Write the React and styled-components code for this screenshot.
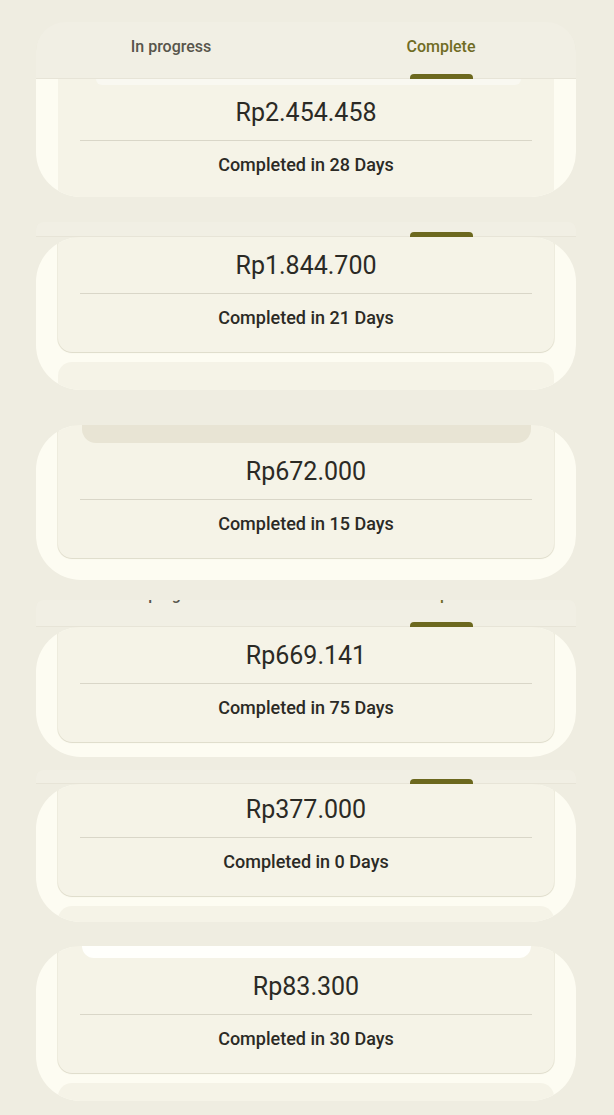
import React from 'react';
import styled, { createGlobalStyle } from 'styled-components';

const GlobalStyle = createGlobalStyle`
  html, body {
    margin: 0;
    padding: 0;
    background: #efede1;
  }
  body {
    font-family: Roboto, 'Noto Sans', sans-serif;
  }
  * {
    box-sizing: border-box;
  }
`;

// each block is one frame of the completed savings list
const blocks = [
  { id: 1, amount: 'Rp2.454.458', days: 28, gap: 0, strip: 57, stripRadius: 30, panelTop: 0, lip: 'thin', padTop: 13, padBottom: 20, flat: true, peek: 0, panelPad: 0 },
  { id: 2, amount: 'Rp1.844.700', days: 21, gap: 25, strip: 15, stripRadius: 8, panelTop: 45, lip: null, padTop: 14, padBottom: 22, peek: 28, panelPad: 0 },
  { id: 3, amount: 'Rp672.000', days: 15, gap: 35, strip: 0, panelTop: 45, lip: 'tan', padTop: 14, padBottom: 22, peek: 0, panelPad: 22 },
  { id: 4, amount: 'Rp669.141', days: 75, gap: 20, strip: 27, stripRadius: 8, panelTop: 45, lip: null, padTop: 14, padBottom: 22, peek: 0, panelPad: 15 },
  { id: 5, amount: 'Rp377.000', days: 0, gap: 13, strip: 14, stripRadius: 8, panelTop: 45, lip: null, padTop: 11, padBottom: 22, peek: 16, panelPad: 0 },
  { id: 6, amount: 'Rp83.300', days: 30, gap: 24, strip: 0, panelTop: 45, lip: 'white', padTop: 14, padBottom: 22, peek: 18, panelPad: 0 },
];

const App = () => {
  return (
    <Page>
      <GlobalStyle />
      {blocks.map((b) => (
        <Block key={b.id} $gap={b.gap}>
          {b.strip > 0 && (
            <TabStrip $height={b.strip} $radius={b.stripRadius}>
              <Tab>
                <TabLabel>In progress</TabLabel>
                <Indicator />
              </Tab>
              <Tab>
                <TabLabel $active>Complete</TabLabel>
                <Indicator $active />
              </Tab>
            </TabStrip>
          )}
          <Panel $top={b.panelTop} $pad={b.panelPad}>
            <Card $padBottom={b.padBottom} $flat={b.flat}>
              {b.lip && <Lip $kind={b.lip} />}
              <CardBody $padTop={b.padTop}>
                <Amount>{b.amount}</Amount>
                <Divider />
                <Days>Completed in {b.days} Days</Days>
              </CardBody>
            </Card>
            {b.peek > 0 && <Peek $height={b.peek} />}
          </Panel>
        </Block>
      ))}
    </Page>
  );
};

export default App;

const Page = styled.div`
  width: 614px;
  min-height: 1115px;
  padding: 22px 38px 0 36px;
  background: #efede1;
  display: flex;
  flex-direction: column;
`;

const Block = styled.div`
  margin-top: ${(p) => p.$gap}px;
  display: flex;
  flex-direction: column;
`;

const TabStrip = styled.div`
  height: ${(p) => p.$height}px;
  background: #f1efe4;
  border-radius: ${(p) => p.$radius}px ${(p) => p.$radius}px 0 0;
  box-shadow: inset 0 -1px 0 #e7e4d7;
  display: flex;
  align-items: flex-end;
  overflow: hidden;
`;

const Tab = styled.div`
  flex: 1;
  display: flex;
  flex-direction: column;
  align-items: center;
`;

const TabLabel = styled.div`
  font-size: 16px;
  line-height: 20px;
  font-weight: 500;
  color: ${(p) => (p.$active ? '#706c24' : '#57554b')};
`;

const Indicator = styled.div`
  width: 63px;
  height: 5px;
  margin-top: 17px;
  border-radius: 4px 4px 0 0;
  background: ${(p) => (p.$active ? '#6c681e' : 'transparent')};
`;

const Panel = styled.div`
  background: #fdfcf2;
  border-radius: ${(p) => p.$top}px ${(p) => p.$top}px 45px 45px;
  padding: 0 22px ${(p) => p.$pad}px;
  overflow: hidden;
  display: flex;
  flex-direction: column;
`;

const Card = styled.div`
  background: #f5f3e7;
  border-radius: ${(p) => (p.$flat ? '0' : '0 0 14px 14px')};
  padding-bottom: ${(p) => p.$padBottom}px;
  box-shadow: ${(p) =>
    p.$flat ? 'none' : '0 0 0 1px rgba(150, 140, 100, 0.12), 0 1px 1px rgba(90, 80, 40, 0.12)'};
  display: flex;
  flex-direction: column;
`;

const lipStyles = {
  thin: 'height: 6px; margin: 0 33px 0 38px; background: #f9f8f1; border-radius: 0 0 6px 6px;',
  tan: 'height: 18px; margin: 0 23px 0 24px; background: #e8e4d4; border-radius: 0 0 14px 14px;',
  white: 'height: 12px; margin: 0 23px 0 24px; background: #fffffc; border-radius: 0 0 14px 14px;',
};

const Lip = styled.div`
  ${(p) => lipStyles[p.$kind]}
`;

const CardBody = styled.div`
  padding-top: ${(p) => p.$padTop}px;
  display: flex;
  flex-direction: column;
`;

const Amount = styled.div`
  text-align: center;
  font-size: 25px;
  line-height: 30px;
  font-weight: 400;
  color: #2b2a25;
`;

const Divider = styled.div`
  height: 1px;
  margin: 12px 22px;
  background: #d9d6c8;
`;

const Days = styled.div`
  text-align: center;
  font-size: 18px;
  line-height: 24px;
  font-weight: 500;
  color: #2b2a25;
`;

const Peek = styled.div`
  height: ${(p) => p.$height}px;
  margin-top: 10px;
  background: #f5f3e7;
  border-radius: 14px 14px 0 0;
`;
